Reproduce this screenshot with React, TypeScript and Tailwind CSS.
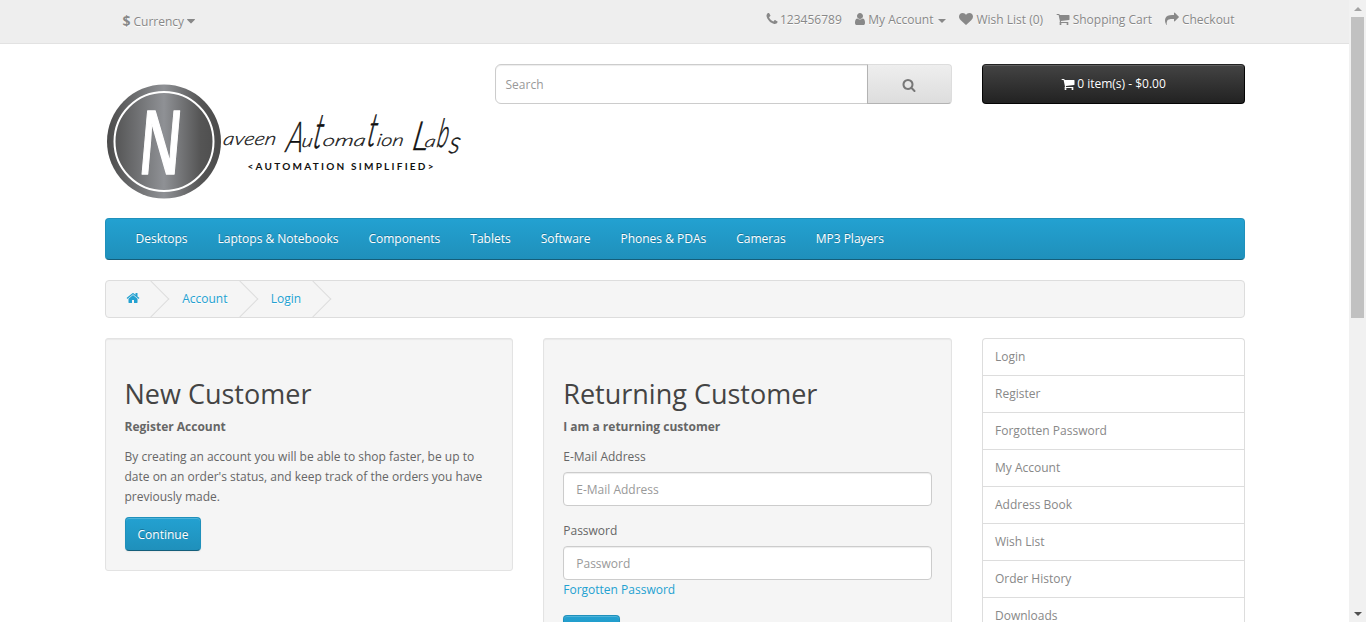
import type { ReactNode } from "react";

const icons = {
  phone: "M1600 1240q0 27-10 70.5t-21 68.5q-21 50-122 106-94 51-186 51-27 0-53-3.5t-57.5-12.5-47-14.5-55.5-20.5-49-18q-98-35-175-83-127-79-264-216t-216-264q-48-77-83-175-3-9-18-49t-20.5-55.5-14.5-47-12.5-57.5-3.5-53q0-92 51-186 56-101 106-122 25-11 68.5-21t70.5-10q14 0 21 3 18 6 53 76 11 19 30 54t35 63.5 31 53.5q3 4 17.5 25t21.5 35.5 7 28.5q0 20-28.5 50t-62 55-62 53-28.5 46q0 9 5 22.5t8.5 20.5 14 24 11.5 19q76 137 174 235t235 174q2 1 19 11.5t24 14 20.5 8.5 22.5 5q18 0 46-28.5t53-62 55-62 50-28.5q14 0 28.5 7t35.5 21.5 25 17.5q25 15 53.5 31t63.5 35 54 30q70 35 76 53 3 7 3 21z",
  user: "M1536 1399q0 109-62.5 187t-150.5 78h-854q-88 0-150.5-78t-62.5-187q0-85 8.5-160.5t31.5-152 58.5-131 94-89 134.5-34.5q131 128 313 128t313-128q76 0 134.5 34.5t94 89 58.5 131 31.5 152 8.5 160.5zm-256-887q0 159-112.5 271.5t-271.5 112.5-271.5-112.5-112.5-271.5 112.5-271.5 271.5-112.5 271.5 112.5 112.5 271.5z",
  heart: "M896 1664q-26 0-44-18l-624-602q-10-8-27.5-26t-55.5-65.5-68-97.5-53.5-121-23.5-138q0-220 127-344t351-124q62 0 126.5 21.5t120 58 95.5 68.5 76 68q36-36 76-68t95.5-68.5 120-58 126.5-21.5q224 0 351 124t127 344q0 221-229 450l-623 600q-18 18-44 18z",
  cart: "M704 1536q0 52-38 90t-90 38-90-38-38-90 38-90 90-38 90 38 38 90zm896 0q0 52-38 90t-90 38-90-38-38-90 38-90 90-38 90 38 38 90zm128-1088v512q0 24-16.5 42.5t-40.5 21.5l-1044 122q13 60 13 70 0 16-24 64h920q26 0 45 19t19 45-19 45-45 19h-1024q-26 0-45-19t-19-45q0-11 8-31.5t16-36 21.5-40 15.5-29.5l-177-823h-204q-26 0-45-19t-19-45 19-45 45-19h256q16 0 28.5 6.5t19.5 15.5 13 24.5 8 26 5.5 29.5 4.5 26h1201q26 0 45 19t19 45z",
  share: "M1792 640q0 26-19 45l-512 512q-19 19-45 19t-45-19-19-45v-256h-224q-98 0-175.5 6t-154 21.5-133 42.5-105.5 69.5-80 101-48.5 138.5-17.5 181q0 55 5 123 0 6 2.5 23.5t2.5 26.5q0 15-8.5 25t-23.5 10q-16 0-28-17-7-9-13-22t-13.5-30-10.5-24q-127-285-127-451 0-199 53-333 162-403 875-403h224v-256q0-26 19-45t45-19 45 19l512 512q19 19 19 45z",
  search: "M1216 832q0-185-131.5-316.5t-316.5-131.5-316.5 131.5-131.5 316.5 131.5 316.5 316.5 131.5 316.5-131.5 131.5-316.5zm512 832q0 52-38 90t-90 38q-54 0-90-38l-343-342q-179 124-399 124-143 0-273.5-55.5t-225-150-150-225-55.5-273.5 55.5-273.5 150-225 225-150 273.5-55.5 273.5 55.5 225 150 150 225 55.5 273.5q0 220-124 399l343 343q37 37 37 90z",
  home: "M1472 992v480q0 26-19 45t-45 19h-384v-384h-256v384h-384q-26 0-45-19t-19-45v-480q0-1 .5-3t.5-3l575-474 575 474q1 2 1 6zm223-69l-62 74q-8 9-21 11h-3q-13 0-21-7l-692-577-692 577q-12 8-24 7-13-2-21-11l-62-74q-8-10-7-23.5t11-21.5l719-599q32-26 76-26t76 26l244 204v-195q0-14 9-23t23-9h192q14 0 23 9t9 23v408l219 182q10 8 11 21.5t-7 23.5z",
  caret: "M1408 704q0 26-19 45l-448 448q-19 19-45 19t-45-19l-448-448q-19-19-19-45t19-45 45-19h896q26 0 45 19t19 45z",
};

function Icon({ name, className = "" }: { name: keyof typeof icons; className?: string }) {
  return (
    <svg viewBox="0 0 1792 1792" fill="currentColor" className={"h-[14px] w-[14px] shrink-0 " + className}>
      <path d={icons[name]} />
    </svg>
  );
}

function TopBar() {
  return (
    <nav className="h-[44px] border-b border-[#e2e2e2] bg-[#eeeeee] text-[#888888] [text-shadow:0_1px_0_#fff]">
      <div className="mx-auto flex w-[1170px] justify-between pl-[33px] pr-[25px]">
        <div className="flex h-[20px] pt-[11px]">
          <strong className="text-[14px] leading-[20px]">$</strong>
          <span className="ml-[3px] leading-[21px]">Currency</span>
          <Icon name="caret" className="mt-[3px]" />
        </div>
        <div className="flex h-[20px] pt-[10px]">
          <Icon name="phone" className="mt-[2px]" />
          <span className="ml-px">123456789</span>
          <Icon name="user" className="ml-[11.5px] mt-[2px]" />
          <span className="ml-[1px]">My Account</span>
          <span className="ml-[5px] mt-[9px] h-0 w-0 border-x-4 border-t-4 border-x-transparent border-t-[#888888]" />
          <Icon name="heart" className="ml-[13px] mt-[2px]" />
          <span className="ml-[3px]">Wish List (0)</span>
          <Icon name="cart" className="ml-[13px] mt-[2px]" />
          <span className="ml-[2.5px]">Shopping Cart</span>
          <Icon name="share" className="ml-[13px] mt-[2px]" />
          <span className="ml-[3px]">Checkout</span>
        </div>
      </div>
    </nav>
  );
}

const scriptGlyphs = [
  { text: "aveen", x: 117.5, y: 61, size: 18, width: 53, stretch: 1 },
  { text: "A", x: 180, y: 68, size: 25, width: 17, stretch: 1.7 },
  { text: "u", x: 196, y: 63, size: 18, width: 11, stretch: 1 },
  { text: "t", x: 207, y: 64, size: 18, width: 9, stretch: 2.7 },
  { text: "oma", x: 217, y: 62, size: 17, width: 43, stretch: 0.95 },
  { text: "t", x: 261, y: 62, size: 18, width: 9, stretch: 2.6 },
  { text: "ion", x: 271, y: 62, size: 17, width: 27, stretch: 1 },
  { text: "L", x: 306, y: 66, size: 25, width: 16, stretch: 1.6 },
  { text: "a", x: 319, y: 63, size: 17, width: 11, stretch: 0.95 },
  { text: "b", x: 331, y: 63, size: 18, width: 11, stretch: 2.2 },
  { text: "s", x: 343, y: 69, size: 18, width: 11, stretch: 1.7 },
];

function Logo() {
  return (
    <svg viewBox="0 0 360 134" className="h-[134px] w-[360px] overflow-visible">
      <defs>
        <linearGradient id="metal" x1="0" x2="1" y1="0" y2="0">
          <stop offset="0" stopColor="#4b4b4b" />
          <stop offset="0.5" stopColor="#8f9195" />
          <stop offset="0.82" stopColor="#555555" />
          <stop offset="1" stopColor="#4b4b4b" />
        </linearGradient>
      </defs>
      <circle cx="59" cy="57.5" r="57" fill="url(#metal)" />
      <circle cx="59" cy="57.5" r="49.5" fill="none" stroke="#ffffff" strokeWidth="2" />
      <text
        transform="translate(32 90) skewX(-5) scale(0.93 1.52)"
        fontFamily="Open Sans, sans-serif"
        fontWeight="600"
        fontSize="58"
        fill="#ffffff"
        stroke="#ffffff"
        strokeWidth="1"
        strokeLinejoin="round"
      >
        N
      </text>
      <g fontFamily="Lato, sans-serif" fontStyle="italic" fontWeight="300" fill="#111111" stroke="#111111" strokeWidth="0.25">
        {scriptGlyphs.map((g) => (
          <text
            key={g.x}
            transform={`translate(${g.x} ${g.y}) skewX(-10) scale(1 ${g.stretch})`}
            fontSize={g.size}
            textLength={g.width}
            lengthAdjust="spacingAndGlyphs"
          >
            {g.text}
          </text>
        ))}
      </g>
      <text x="142.5" y="86" fontFamily="Lato, sans-serif" fontWeight="700" fontSize="10" textLength="186" fill="#111111">
        &lt;AUTOMATION SIMPLIFIED&gt;
      </text>
    </svg>
  );
}

function Header() {
  return (
    <header className="mt-[20px] flex h-[154px]">
      <div className="w-[390px] pt-[20px]">
        <Logo />
      </div>
      <div className="flex h-[40px] w-[457.5px]">
        <div className="flex flex-1 items-center rounded-l-[6px] border border-[#cccccc] bg-white px-[10px] pt-[2px] text-[#999999] shadow-[inset_0_1px_1px_rgba(0,0,0,0.075)]">
          Search
        </div>
        <div className="-ml-px flex w-[85.5px] items-center justify-center rounded-r-[4px] border border-b-[#b3b3b3] border-l-[#b3b3b3] border-r-[#dddddd] border-t-[#dddddd] bg-linear-to-b from-[#eeeeee] to-[#dddddd] text-[#777777]">
          <Icon name="search" className="mt-px" />
        </div>
      </div>
      <div className="ml-[30px] flex h-[40px] w-[262.5px] items-center justify-center rounded-[4px] border border-[#040404] border-t-[#222222] bg-linear-to-b from-[#444444] to-[#222222] text-white shadow-[inset_0_1px_0_rgba(255,255,255,0.15)] [text-shadow:0_-1px_0_rgba(0,0,0,0.25)]">
        <Icon name="cart" className="-mt-px" />
        <span className="ml-[2.5px]">0 item(s) - $0.00</span>
      </div>
    </header>
  );
}

const menu = ["Desktops", "Laptops & Notebooks", "Components", "Tablets", "Software", "Phones & PDAs", "Cameras", "MP3 Players"];

function Menu() {
  return (
    <nav className="flex h-[42px] rounded-[4px] border border-[#1f90bb] border-b-[#145e7a] bg-linear-to-b from-[#23a1d1] to-[#1f90bb] px-[15px] text-white [text-shadow:0_-1px_0_rgba(0,0,0,0.25)]">
      {menu.map((item) => (
        <a key={item} className="px-[15px] py-[10px]">{item}</a>
      ))}
    </nav>
  );
}

function Crumb({ children }: { children: ReactNode }) {
  return (
    <li className="relative mr-[3.2px] flex h-[20px] px-[20px] after:absolute after:-top-[3px] after:-right-[5px] after:h-[26px] after:w-[26px] after:-rotate-45 after:border-b after:border-r after:border-[#dddddd]">
      {children}
    </li>
  );
}

function Breadcrumb() {
  return (
    <ul className="mt-[20px] flex h-[38px] rounded-[4px] border border-[#dddddd] bg-[#f5f5f5] py-[8px] text-[#23a1d1] [text-shadow:0_1px_0_#fff]">
      <Crumb><Icon name="home" className="-mr-[0.5px] mt-[2px]" /></Crumb>
      <Crumb>Account</Crumb>
      <Crumb>Login</Crumb>
    </ul>
  );
}

function Well({ title, subtitle, children }: { title: string; subtitle: string; children: ReactNode }) {
  return (
    <section className="w-[408.75px] self-start rounded-[3px] border border-[#e3e3e3] bg-[#f5f5f5] p-[19px] shadow-[inset_0_1px_1px_rgba(0,0,0,0.05)]">
      <h2 className="mb-[8px] mt-[21px] text-[27px] font-normal leading-[30px] text-[#444444]">{title}</h2>
      <p className="mb-[10px] font-bold">{subtitle}</p>
      {children}
    </section>
  );
}

function Button({ children }: { children: ReactNode }) {
  return (
    <button className="block h-[34px] rounded-[4px] border border-[#1f90bb] border-b-[#145e7a] bg-linear-to-b from-[#23a1d1] to-[#1f90bb] px-[12px] pt-[2px] text-[12px] leading-[20px] text-white shadow-[inset_0_1px_0_rgba(255,255,255,0.2),0_1px_2px_rgba(0,0,0,0.05)] [text-shadow:0_-1px_0_rgba(0,0,0,0.25)]">
      {children}
    </button>
  );
}

function Field({ label, type }: { label: string; type: string }) {
  return (
    <>
      <label className="mb-[5px] block">{label}</label>
      <input
        type={type}
        placeholder={label}
        className="block h-[34px] w-full rounded-[4px] border border-[#cccccc] bg-white px-[12px] pt-px shadow-[inset_0_1px_1px_rgba(0,0,0,0.075)] placeholder:text-[#999999]"
      />
    </>
  );
}

const links = ["Login", "Register", "Forgotten Password", "My Account", "Address Book", "Wish List", "Order History", "Downloads"];

function Scrollbar() {
  return (
    <div className="flex w-[17px] flex-col items-center bg-[#f1f1f1]">
      <div className="flex h-[17px] items-center">
        <span className="border-x-[4px] border-b-4 border-x-transparent border-b-[#a3a3a3]" />
      </div>
      <div className="h-[301px] w-[13px] bg-[#c1c1c1]" />
      <div className="mt-auto flex h-[17px] items-center">
        <span className="border-x-[4px] border-t-4 border-x-transparent border-t-[#505050]" />
      </div>
    </div>
  );
}

export default function App() {
  return (
    <div className="flex h-[622px] w-[1366px] overflow-hidden bg-white font-['Open_Sans',sans-serif] text-[12px] leading-[20px] text-[#666666]">
      <div className="w-[1349px]">
        <TopBar />
        <div className="mx-auto w-[1140px]">
          <Header />
          <Menu />
          <Breadcrumb />
          <main className="mt-[20px] flex gap-[30px]">
            <Well title="New Customer" subtitle="Register Account">
              <p className="mb-[10px]">
                By creating an account you will be able to shop faster, be up to date on an order's status, and keep track of the orders you have previously made.
              </p>
              <Button>Continue</Button>
            </Well>
            <Well title="Returning Customer" subtitle="I am a returning customer">
              <div className="mb-[15px]"><Field label="E-Mail Address" type="text" /></div>
              <div className="mb-[15px]">
                <Field label="Password" type="password" />
                <a className="block text-[#23a1d1]">Forgotten Password</a>
              </div>
              <Button>Login</Button>
            </Well>
            <aside className="w-[262.5px] self-start rounded-t-[4px] border border-b-0 border-[#dddddd] text-[#888888]">
              {links.map((link) => (
                <a key={link} className="block border-b border-[#dddddd] px-[12px] py-[8px]">{link}</a>
              ))}
            </aside>
          </main>
        </div>
      </div>
      <Scrollbar />
    </div>
  );
}
